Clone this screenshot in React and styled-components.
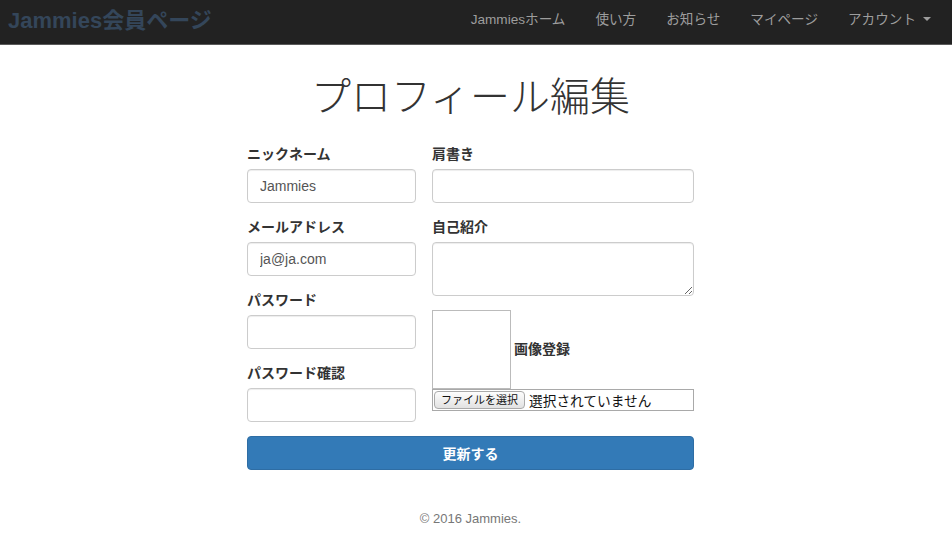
import React from "react";
import styled, { createGlobalStyle } from "styled-components";

const Global = createGlobalStyle`
  html, body { margin: 0; padding: 0; background: #fff; }
  body {
    font-family: "Liberation Sans", Arial, "Noto Sans CJK JP", sans-serif;
    font-size: 14px;
    color: #333;
  }
  * { box-sizing: border-box; }
`;

const Navbar = styled.nav`
  height: 45px;
  background: #222;
  border-bottom: 1px solid #5a5a5a;
  display: flex;
  align-items: center;
  justify-content: space-between;
  padding: 0 0 8px 8px;
`;

const Brand = styled.a`
  font-size: 22px;
  font-weight: bold;
  color: #34465a;
  text-decoration: none;
`;

const NavList = styled.ul`
  display: flex;
  list-style: none;
  margin: 0;
  padding: 0;
`;

const NavItem = styled.li`
  padding: 0 15px;
  color: #9d9d9d;
  font-size: 13.6px;
  display: flex;
  align-items: center;
  gap: 7px;
  &:last-child { padding-right: 21px; }
`;

const Caret = styled.span`
  display: inline-block;
  width: 0;
  height: 0;
  border-top: 4px solid #9d9d9d;
  border-left: 4px solid transparent;
  border-right: 4px solid transparent;
  margin-top: 2px;
`;

const Main = styled.main`
  display: flex;
  flex-direction: column;
  align-items: center;
  padding-right: 11px;
`;

const Title = styled.h1`
  margin: 29px 0 25px;
  font-size: 40px;
  font-weight: 300;
  line-height: 46px;
  color: #333;
`;

const Form = styled.form`
  width: 447px;
  display: flex;
  flex-direction: column;
`;

const Columns = styled.div`
  display: grid;
  grid-template-columns: 169px 262px;
  column-gap: 16px;
`;

const Column = styled.div`
  display: flex;
  flex-direction: column;
`;

const Group = styled.div`
  display: flex;
  flex-direction: column;
  margin-bottom: 15px;
`;

const Label = styled.label`
  font-weight: bold;
  font-size: 14px;
  line-height: 19px;
  margin-bottom: 5px;
  color: #333;
`;

const Input = styled.input`
  height: 34px;
  border: 1px solid #ccc;
  border-radius: 4px;
  padding: 6px 12px;
  font-family: inherit;
  font-size: 14px;
  color: #555;
  box-shadow: inset 0 1px 1px rgba(0,0,0,0.075);
  outline: none;
`;

const TextArea = styled.textarea`
  height: 54px;
  border: 1px solid #ccc;
  border-radius: 4px;
  padding: 6px 12px;
  font-family: inherit;
  font-size: 14px;
  box-shadow: inset 0 1px 1px rgba(0,0,0,0.075);
  resize: vertical;
  outline: none;
`;

const ImageRow = styled.div`
  display: flex;
  align-items: center;
  gap: 3px;
  margin-top: -1px;
`;

const ImageBox = styled.div`
  width: 79px;
  height: 79px;
  border: 1px solid #bbb;
  background: #fff;
`;

const ImageLabel = styled.span`
  font-weight: bold;
  font-size: 14px;
  margin-top: -4px;
`;

const FileBox = styled.div`
  height: 22px;
  border: 1px solid #a9a9a9;
  display: flex;
  align-items: center;
  gap: 4px;
  padding: 0 1px;
`;

const FileButton = styled.span`
  height: 18px;
  padding: 0 6px;
  border: 1px solid #aaa;
  border-radius: 4px;
  background: linear-gradient(#fdfdfd, #e2e2e2);
  font-size: 11px;
  line-height: 16px;
  color: #111;
`;

const FileText = styled.span`
  font-size: 13.7px;
  color: #111;
`;

const SubmitButton = styled.button`
  margin-top: -1px;
  height: 34px;
  width: 100%;
  background: #337ab7;
  border: 1px solid #2e6da4;
  border-radius: 4px;
  color: #fff;
  font-family: inherit;
  font-weight: bold;
  font-size: 14px;
`;

const Footer = styled.footer`
  margin-top: 41px;
  font-size: 13px;
  color: #777;
`;

export default function App() {
  return (
    <>
      <Global />
      <Navbar>
        <Brand>Jammies会員ページ</Brand>
        <NavList>
          <NavItem>Jammiesホーム</NavItem>
          <NavItem>使い方</NavItem>
          <NavItem>お知らせ</NavItem>
          <NavItem>マイページ</NavItem>
          <NavItem>アカウント<Caret /></NavItem>
        </NavList>
      </Navbar>
      <Main>
        <Title>プロフィール編集</Title>
        <Form onSubmit={(e) => e.preventDefault()}>
          <Columns>
            <Column>
              <Group>
                <Label>ニックネーム</Label>
                <Input defaultValue="Jammies" />
              </Group>
              <Group>
                <Label>メールアドレス</Label>
                <Input defaultValue="ja@ja.com" />
              </Group>
              <Group>
                <Label>パスワード</Label>
                <Input type="password" />
              </Group>
              <Group>
                <Label>パスワード確認</Label>
                <Input type="password" />
              </Group>
            </Column>
            <Column>
              <Group>
                <Label>肩書き</Label>
                <Input />
              </Group>
              <Group>
                <Label>自己紹介</Label>
                <TextArea rows={2} />
              </Group>
              <ImageRow>
                <ImageBox />
                <ImageLabel>画像登録</ImageLabel>
              </ImageRow>
              <FileBox>
                <FileButton>ファイルを選択</FileButton>
                <FileText>選択されていません</FileText>
              </FileBox>
            </Column>
          </Columns>
          <SubmitButton type="submit">更新する</SubmitButton>
        </Form>
        <Footer>© 2016 Jammies.</Footer>
      </Main>
    </>
  );
}
